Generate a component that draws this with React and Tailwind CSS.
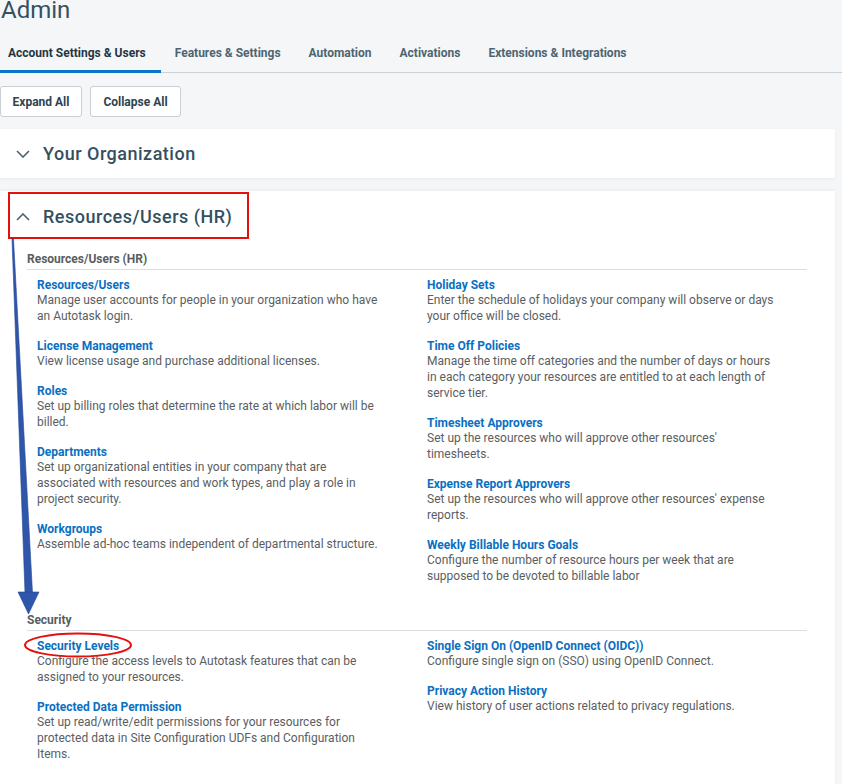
import React from "react";

const tabs = [
  "Account Settings & Users",
  "Features & Settings",
  "Automation",
  "Activations",
  "Extensions & Integrations",
];

const hrLeft = [
  {
    title: "Resources/Users",
    desc: "Manage user accounts for people in your organization who have an Autotask login.",
  },
  {
    title: "License Management",
    desc: "View license usage and purchase additional licenses.",
  },
  {
    title: "Roles",
    desc: "Set up billing roles that determine the rate at which labor will be billed.",
  },
  {
    title: "Departments",
    desc: "Set up organizational entities in your company that are associated with resources and work types, and play a role in project security.",
  },
  {
    title: "Workgroups",
    desc: "Assemble ad-hoc teams independent of departmental structure.",
  },
];

const hrRight = [
  {
    title: "Holiday Sets",
    desc: "Enter the schedule of holidays your company will observe or days your office will be closed.",
  },
  {
    title: "Time Off Policies",
    desc: "Manage the time off categories and the number of days or hours in each category your resources are entitled to at each length of service tier.",
  },
  {
    title: "Timesheet Approvers",
    desc: "Set up the resources who will approve other resources' timesheets.",
  },
  {
    title: "Expense Report Approvers",
    desc: "Set up the resources who will approve other resources' expense reports.",
  },
  {
    title: "Weekly Billable Hours Goals",
    desc: "Configure the number of resource hours per week that are supposed to be devoted to billable labor",
  },
];

const secLeft = [
  {
    title: "Security Levels",
    desc: "Configure the access levels to Autotask features that can be assigned to your resources.",
  },
  {
    title: "Protected Data Permission",
    desc: "Set up read/write/edit permissions for your resources for protected data in Site Configuration UDFs and Configuration Items.",
  },
];

const secRight = [
  {
    title: "Single Sign On (OpenID Connect (OIDC))",
    desc: "Configure single sign on (SSO) using OpenID Connect.",
  },
  {
    title: "Privacy Action History",
    desc: "View history of user actions related to privacy regulations.",
  },
];

const Chevron = ({ up }) => (
  <svg width="14" height="8" viewBox="0 0 14 8" className="shrink-0">
    <path
      d={up ? "M1 7 L7 1 L13 7" : "M1 1 L7 7 L13 1"}
      fill="none"
      stroke="#4b6370"
      strokeWidth="1.6"
    />
  </svg>
);

const Item = ({ item }) => (
  <div className="mb-[15px] pl-[10px]">
    <div className="text-[12px] leading-[14px] font-bold text-[#0a70c2]">
      {item.title}
    </div>
    <div className="text-[12px] leading-4 text-[#5a5e62] max-w-[350px]">
      {item.desc}
    </div>
  </div>
);

const Section = ({ label, left, right, className }) => (
  <div className={className}>
    <div className="text-[12px] leading-4 font-bold text-[#595d61] pb-[2px] border-b border-[#dcdfe2]">
      {label}
    </div>
    <div className="grid grid-cols-2 mt-2">
      <div>
        {left.map((it) => (
          <Item key={it.title} item={it} />
        ))}
      </div>
      <div>
        {right.map((it) => (
          <Item key={it.title} item={it} />
        ))}
      </div>
    </div>
  </div>
);

export default function App() {
  return (
    <div
      className="relative w-[842px] h-[784px] overflow-hidden bg-[#f4f6f8]"
      style={{ fontFamily: "Roboto, 'Liberation Sans', sans-serif" }}
    >
      <h1 className="-mt-1 pl-[1px] text-[24px] leading-7 text-[#35505e]">
        Admin
      </h1>

      <div className="mt-[11px] flex border-b border-[#ccd3d8] h-[38px]">
        {tabs.map((t, i) => (
          <div
            key={t}
            className={
              i === 0
                ? "pl-2 pr-[15px] flex items-center text-[12px] font-bold text-[#1f3644] border-b-[3px] border-[#0a74cc] -mb-[1px]"
                : "px-[14px] flex items-center text-[12px] font-bold text-[#4d6572]"
            }
          >
            <span className={i === 0 ? "pt-[1px]" : "pb-[2px]"}>{t}</span>
          </div>
        ))}
      </div>

      <div className="mt-[13px] flex gap-2">
        <button className="h-[31px] w-[82px] bg-white border border-[#c9cfd4] rounded-[3px] text-[12px] font-bold text-[#2e4350]">
          Expand All
        </button>
        <button className="h-[31px] w-[91px] bg-white border border-[#c9cfd4] rounded-[3px] text-[12px] font-bold text-[#2e4350]">
          Collapse All
        </button>
      </div>

      <div className="mt-3 w-[835px] h-[49px] bg-white shadow-[0_1px_3px_rgba(0,0,0,0.06)] flex items-center pl-[16px] gap-[13px]">
        <Chevron />
        <span className="text-[18px] font-medium tracking-[0.5px] text-[#344f5d]">
          Your Organization
        </span>
      </div>

      <div className="mt-[13px] w-[835px] bg-white h-[600px] shadow-[0_-1px_3px_rgba(0,0,0,0.05)]">
        <div className="pt-[14px] pb-2 pl-[16px] flex items-center gap-[13px] h-[46px]">
          <Chevron up />
          <span className="text-[18px] leading-6 font-medium tracking-[0.5px] text-[#344f5d]">
            Resources/Users (HR)
          </span>
        </div>
        <div className="pt-[14px] pl-[27px] pr-[28px]">
          <Section label="Resources/Users (HR)" left={hrLeft} right={hrRight} />
          <Section
            label="Security"
            left={secLeft}
            right={secRight}
            className="mt-[13px]"
          />
        </div>
      </div>

      <svg
        className="absolute left-0 top-0 pointer-events-none"
        width="842"
        height="784"
        viewBox="0 0 842 784"
      >
        <rect
          x="9"
          y="193"
          width="239"
          height="45"
          fill="none"
          stroke="#e5100e"
          strokeWidth="2"
        />
        <polygon
          points="12,239 13.5,239 32.5,593 25,593"
          fill="#2f56a8"
          stroke="#24479a"
          strokeWidth="0.6"
        />
        <polygon
          points="18,592 39,592 28.5,614"
          fill="#2f56a8"
          stroke="#24479a"
          strokeWidth="0.6"
        />
        <ellipse
          cx="78"
          cy="645"
          rx="53"
          ry="11.5"
          fill="none"
          stroke="#e5100e"
          strokeWidth="2"
        />
      </svg>
    </div>
  );
}
